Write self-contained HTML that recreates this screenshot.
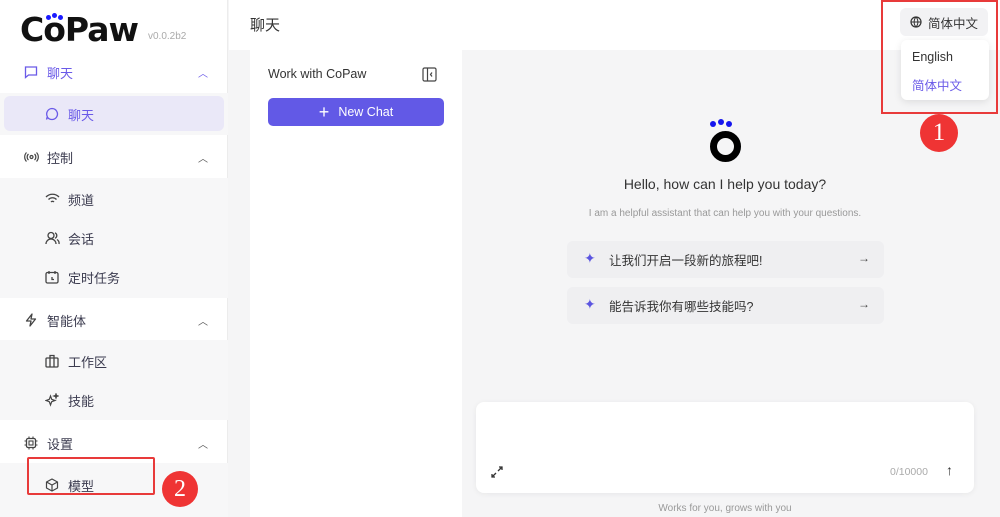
<!DOCTYPE html>
<html><head><meta charset="utf-8"><style>
*{box-sizing:border-box;margin:0;padding:0}
body{width:1000px;height:517px;overflow:hidden;background:#f5f5f6;font-family:"Liberation Sans","Noto Sans CJK SC",sans-serif;position:relative;color:#333}
.abs{position:absolute}
.side{left:0;top:0;width:228px;height:517px;background:#fff;border-right:1px solid #ececec}
.grp{position:absolute;left:0;width:228px;background:#f7f7f8}
.it{position:absolute;left:0;width:228px;height:40px;display:flex;align-items:center;font-size:13px;color:#3b3b4f}
.it svg{position:absolute}
.it span{position:absolute}
.car{position:absolute;right:20px;font-size:10px;color:#555}
</style></head><body>
<div class="abs side">
 <div class="abs" style="left:20px;top:10px;font-family:'DejaVu Sans',sans-serif;font-weight:bold;font-size:33px;letter-spacing:-1px;color:#111">CoPaw</div>
 <div class="abs" style="left:46px;top:13px;display:flex;gap:1px"><i style="width:5px;height:5px;border-radius:50%;background:#1a1aff;display:block;margin-top:2px"></i><i style="width:5px;height:5px;border-radius:50%;background:#1a1aff;display:block"></i><i style="width:5px;height:5px;border-radius:50%;background:#1a1aff;display:block;margin-top:2px"></i></div>
 <div class="abs" style="left:148px;top:31px;font-size:10px;color:#aaa">v0.0.2b2</div>

 <div class="grp" style="top:93px;height:42px"></div>
 <div class="abs" style="left:4px;top:96px;width:220px;height:35px;background:#eae8f8;border-radius:6px"></div>
 <div class="grp" style="top:178px;height:120px"></div>
 <div class="grp" style="top:340px;height:80px"></div>
 <div class="grp" style="top:463px;height:54px"></div>

 <div class="it" style="top:52px;color:#6a5ae8"><svg style="left:24px" width="14" height="14" viewBox="0 0 14 14"><path d="M1.5 2h11v8h-8l-3 2.5z" fill="none" stroke="#6a5ae8" stroke-width="1.3"/></svg><span style="left:47px">聊天</span><span class="car" style="color:#6a5ae8">︿</span></div>
 <div class="it" style="top:94px;color:#6a5ae8"><svg style="left:45px" width="14" height="14" viewBox="0 0 14 14"><path d="M7 1.5a5.5 5.5 0 1 1-4.5 8.7L1.5 12.5l.8-3A5.5 5.5 0 0 1 7 1.5z" fill="none" stroke="#6a5ae8" stroke-width="1.3"/></svg><span style="left:68px">聊天</span></div>
 <div class="it" style="top:137px"><svg style="left:24px" width="15" height="14" viewBox="0 0 15 14"><circle cx="7.5" cy="7" r="1.5" fill="none" stroke="#444" stroke-width="1.2"/><path d="M4.5 4a4 4 0 0 0 0 6M10.5 4a4 4 0 0 1 0 6M2.5 2.5a6.5 6.5 0 0 0 0 9M12.5 2.5a6.5 6.5 0 0 1 0 9" fill="none" stroke="#444" stroke-width="1.2"/></svg><span style="left:47px">控制</span><span class="car">︿</span></div>
 <div class="it" style="top:179px"><svg style="left:45px" width="15" height="14" viewBox="0 0 15 14"><path d="M1 5a9 9 0 0 1 13 0M3.5 7.5a5.5 5.5 0 0 1 8 0M6 10a2 2 0 0 1 3 0" fill="none" stroke="#444" stroke-width="1.3"/></svg><span style="left:68px">频道</span></div>
 <div class="it" style="top:218px"><svg style="left:45px" width="15" height="14" viewBox="0 0 15 14"><circle cx="6" cy="4.5" r="3" fill="none" stroke="#444" stroke-width="1.3"/><path d="M1 13a5 5 0 0 1 10 0M10 1.8a3 3 0 0 1 0 5.5M12 8.5a4.5 4.5 0 0 1 2 4.5" fill="none" stroke="#444" stroke-width="1.3"/></svg><span style="left:68px">会话</span></div>
 <div class="it" style="top:257px"><svg style="left:45px" width="14" height="14" viewBox="0 0 14 14"><rect x="1" y="2.5" width="12" height="10.5" rx="1.5" fill="none" stroke="#444" stroke-width="1.3"/><path d="M4 1v3M10 1v3M7 7v2.5h2" fill="none" stroke="#444" stroke-width="1.3"/></svg><span style="left:68px">定时任务</span></div>
 <div class="it" style="top:300px"><svg style="left:24px" width="14" height="14" viewBox="0 0 14 14"><path d="M8 1L2.5 8h4.5L6 13l5.5-7H7z" fill="none" stroke="#444" stroke-width="1.3" stroke-linejoin="round"/></svg><span style="left:47px">智能体</span><span class="car">︿</span></div>
 <div class="it" style="top:341px"><svg style="left:45px" width="14" height="14" viewBox="0 0 14 14"><rect x="1" y="4" width="12" height="9" rx="1" fill="none" stroke="#444" stroke-width="1.3"/><path d="M5 4V1.5h4V4M5 4v9M9 4v9" fill="none" stroke="#444" stroke-width="1.3"/></svg><span style="left:68px">工作区</span></div>
 <div class="it" style="top:380px"><svg style="left:45px" width="14" height="14" viewBox="0 0 14 14"><path d="M5.5 3l1.2 3.3L10 7.5 6.7 8.7 5.5 12 4.3 8.7 1 7.5l3.3-1.2zM11 1l.5 1.5L13 3l-1.5.5L11 5l-.5-1.5L9 3l1.5-.5z" fill="none" stroke="#444" stroke-width="1.2"/></svg><span style="left:68px">技能</span></div>
 <div class="it" style="top:423px"><svg style="left:24px" width="14" height="14" viewBox="0 0 14 14"><rect x="2.5" y="2.5" width="9" height="9" rx="1.5" fill="none" stroke="#444" stroke-width="1.3"/><rect x="5" y="5" width="4" height="4" fill="none" stroke="#444" stroke-width="1.1"/><path d="M5 0.5v2M9 0.5v2M5 11.5v2M9 11.5v2M0.5 5h2M0.5 9h2M11.5 5h2M11.5 9h2" stroke="#444" stroke-width="1.1"/></svg><span style="left:47px">设置</span><span class="car">︿</span></div>
 <div class="it" style="top:465px"><svg style="left:45px" width="14" height="14" viewBox="0 0 14 14"><path d="M7 1l5.5 3v6L7 13 1.5 10V4zM1.5 4L7 7l5.5-3M7 7v6" fill="none" stroke="#444" stroke-width="1.2" stroke-linejoin="round"/></svg><span style="left:68px">模型</span></div>
 <div class="abs" style="left:27px;top:457px;width:128px;height:38px;border:2px solid #e83a3a;border-radius:2px"></div>
 <div class="abs" style="left:162px;top:471px;width:36px;height:36px;border-radius:50%;background:#ef3434;color:#fff;font-family:'Liberation Serif',serif;font-size:24px;text-align:center;line-height:36px">2</div>
</div>

<div class="abs" style="left:229px;top:0;width:771px;height:50px;background:#fff"></div>
<div class="abs" style="left:250px;top:14px;font-size:15px;color:#333">聊天</div>

<div class="abs" style="left:250px;top:50px;width:212px;height:467px;background:#fff"></div>
<div class="abs" style="left:268px;top:67px;font-size:12.5px;color:#333">Work with CoPaw</div>
<svg class="abs" style="left:422px;top:67px" width="15" height="15" viewBox="0 0 15 15"><rect x="1" y="1" width="13" height="13" rx="1.5" fill="none" stroke="#444" stroke-width="1.2"/><path d="M5.5 1v13M10 5.5L8.5 7.5 10 9.5" fill="none" stroke="#444" stroke-width="1.2"/></svg>
<div class="abs" style="left:268px;top:98px;width:176px;height:28px;background:#6259e6;border-radius:5px;color:#fff;font-size:12.5px;display:flex;align-items:center;justify-content:center"><span style="font-size:18px;margin-right:9px;font-weight:300;line-height:1">+</span>New Chat</div>

<div class="abs" style="left:710px;top:119px;display:flex;gap:2px"><i style="width:6px;height:6px;border-radius:50%;background:#1515ee;display:block;margin-top:2px"></i><i style="width:6px;height:6px;border-radius:50%;background:#1515ee;display:block"></i><i style="width:6px;height:6px;border-radius:50%;background:#1515ee;display:block;margin-top:2px"></i></div>
<div class="abs" style="left:710px;top:131px;width:31px;height:31px;border-radius:50%;border:7px solid #000"></div>
<div class="abs" style="left:462px;top:176px;width:526px;text-align:center;font-size:14px;color:#333">Hello, how can I help you today?</div>
<div class="abs" style="left:462px;top:208px;width:526px;text-align:center;font-size:10px;color:#999">I am a helpful assistant that can help you with your questions.</div>
<div class="abs" style="left:567px;top:241px;width:317px;height:37px;background:#efeff1;border-radius:6px"></div>
<div class="abs" style="left:567px;top:287px;width:317px;height:37px;background:#efeff1;border-radius:6px"></div>
<div class="abs" style="left:584px;top:250px;color:#5b55e0;font-size:14px">✦</div>
<div class="abs" style="left:584px;top:296px;color:#5b55e0;font-size:14px">✦</div>
<div class="abs" style="left:609px;top:250px;font-size:12.5px;color:#333">让我们开启一段新的旅程吧!</div>
<div class="abs" style="left:609px;top:296px;font-size:12.5px;color:#333">能告诉我你有哪些技能吗?</div>
<div class="abs" style="left:858px;top:251px;font-size:12px;color:#444">→</div>
<div class="abs" style="left:858px;top:297px;font-size:12px;color:#444">→</div>

<div class="abs" style="left:476px;top:402px;width:498px;height:91px;background:#fff;border-radius:8px;box-shadow:0 1px 6px rgba(0,0,0,.06)"></div>
<svg class="abs" style="left:490px;top:465px" width="14" height="14" viewBox="0 0 14 14"><path d="M8 6l4-4M9 2h3v3M6 8l-4 4M2 9v3h3" fill="none" stroke="#333" stroke-width="1.3"/></svg>
<div class="abs" style="left:890px;top:466px;font-size:10.5px;color:#aaa">0/10000</div>
<div class="abs" style="left:946px;top:462px;font-size:14px;color:#333">↑</div>
<div class="abs" style="left:462px;top:503px;width:526px;text-align:center;font-size:10px;color:#999">Works for you, grows with you</div>

<div class="abs" style="left:900px;top:8px;width:88px;height:28px;background:#f2f2f4;border-radius:6px;display:flex;align-items:center;font-size:12.5px;color:#333"><svg style="margin:0 6px 0 10px" width="12" height="12" viewBox="0 0 12 12"><circle cx="6" cy="6" r="5" fill="none" stroke="#333" stroke-width="1.2"/><path d="M1 6h10M6 1c-2.5 2.8-2.5 7.2 0 10M6 1c2.5 2.8 2.5 7.2 0 10" fill="none" stroke="#333" stroke-width="1"/></svg>简体中文</div>
<div class="abs" style="left:901px;top:40px;width:88px;height:60px;background:#fff;border-radius:6px;box-shadow:0 2px 8px rgba(0,0,0,.1)"></div>
<div class="abs" style="left:912px;top:50px;font-size:12.5px;color:#333">English</div>
<div class="abs" style="left:912px;top:75px;font-size:12.5px;color:#6a5ae8">简体中文</div>
<div class="abs" style="left:881px;top:0;width:117px;height:114px;border:2px solid #e83a3a"></div>
<div class="abs" style="left:920px;top:114px;width:38px;height:38px;border-radius:50%;background:#ef3434;color:#fff;font-family:'Liberation Serif',serif;font-size:25px;text-align:center;line-height:38px">1</div>
</body></html>
